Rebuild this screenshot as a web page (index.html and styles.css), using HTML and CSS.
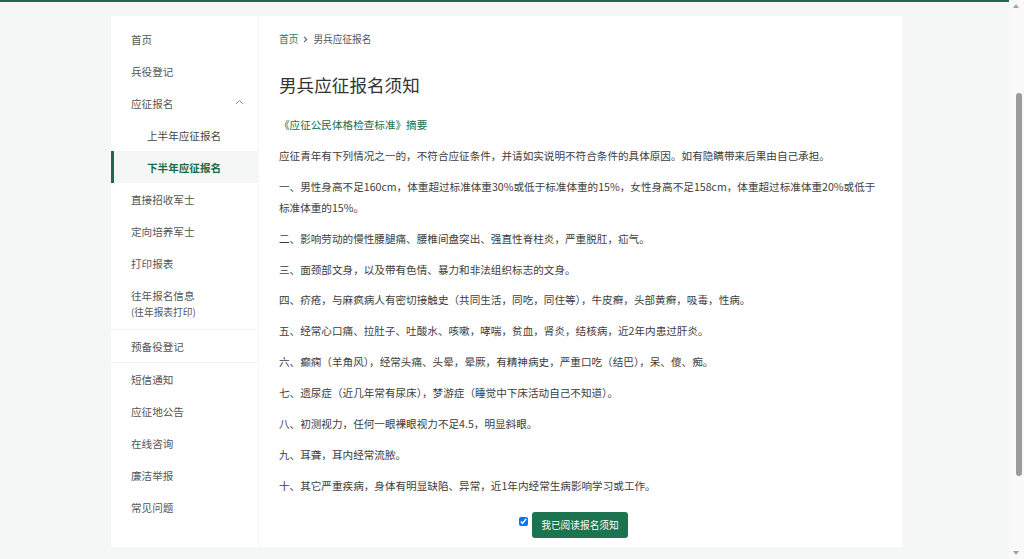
FILE: index.html
```html
<!DOCTYPE html>
<html lang="zh-CN">
<head>
  <meta charset="UTF-8">
  <meta name="viewport" content="width=device-width, initial-scale=1.0">
  <title>男兵应征报名须知</title>
  <link rel="stylesheet" href="styles.css">
</head>
<body>

  <header class="site-header"></header>

  <div class="main">
    <!-- Side menu -->
    <aside class="side-menu">
      <a class="menu-item" href="#">首页</a>
      <a class="menu-item" href="#">兵役登记</a>
      <a class="menu-item menu-group" href="#">
        <span>应征报名</span>
        <svg class="chevron" width="9" height="6" viewBox="0 0 9 6"><polyline points="1,5 4.5,1.5 8,5" fill="none" stroke="#888" stroke-width="1"/></svg>
      </a>
      <a class="menu-item sub-item" href="#">上半年应征报名</a>
      <a class="menu-item sub-item active" href="#">下半年应征报名</a>
      <a class="menu-item" href="#">直接招收军士</a>
      <a class="menu-item" href="#">定向培养军士</a>
      <a class="menu-item" href="#">打印报表</a>
      <a class="menu-item two-line" href="#">往年报名信息<small>(往年报表打印)</small></a>
      <a class="menu-item divided" href="#">预备役登记</a>
      <a class="menu-item" href="#">短信通知</a>
      <a class="menu-item" href="#">应征地公告</a>
      <a class="menu-item" href="#">在线咨询</a>
      <a class="menu-item" href="#">廉洁举报</a>
      <a class="menu-item" href="#">常见问题</a>
    </aside>

    <!-- Notice content -->
    <section class="content">
      <div class="breadcrumb">
        <a class="crumb-home" href="#">首页</a>
        <svg class="sep" width="5" height="7" viewBox="0 0 5 7"><polyline points="1,0.8 3.8,3.5 1,6.2" fill="none" stroke="#666" stroke-width="1.1"/></svg>
        <span>男兵应征报名</span>
      </div>

      <h1>男兵应征报名须知</h1>

      <p class="subtitle">《应征公民体格检查标准》摘要</p>

      <p>应征青年有下列情况之一的，不符合应征条件，并请如实说明不符合条件的具体原因。如有隐瞒带来后果由自己承担。</p>
      <p>一、男性身高不足160cm，体重超过标准体重30%或低于标准体重的15%，女性身高不足158cm，体重超过标准体重20%或低于标准体重的15%。</p>
      <p>二、影响劳动的慢性腰腿痛、腰椎间盘突出、强直性脊柱炎，严重脱肛，疝气。</p>
      <p>三、面颈部文身，以及带有色情、暴力和非法组织标志的文身。</p>
      <p>四、疥疮，与麻疯病人有密切接触史（共同生活，同吃，同住等），牛皮癣，头部黄癣，吸毒，性病。</p>
      <p>五、经常心口痛、拉肚子、吐酸水、咳嗽，哮喘，贫血，肾炎，结核病，近2年内患过肝炎。</p>
      <p>六、癫痫（羊角风），经常头痛、头晕，晕厥，有精神病史，严重口吃（结巴），呆、傻、痴。</p>
      <p>七、遗尿症（近几年常有尿床），梦游症（睡觉中下床活动自己不知道）。</p>
      <p>八、初测视力，任何一眼裸眼视力不足4.5，明显斜眼。</p>
      <p>九、耳聋，耳内经常流脓。</p>
      <p>十、其它严重疾病，身体有明显缺陷、异常，近1年内经常生病影响学习或工作。</p>

      <div class="confirm">
        <input type="checkbox" id="readNotice" checked>
        <button>我已阅读报名须知</button>
      </div>
    </section>
  </div>

  <footer class="site-footer"></footer>

  <!-- Window scrollbar, drawn since the browser hides its own -->
  <div class="scrollbar">
    <span class="arrow up"></span>
    <span class="thumb"></span>
    <span class="arrow down"></span>
  </div>

  <script src="script.js"></script>
</body>
</html>
```

FILE: styles.css
```css
/* General Styles */
body {
  margin: 0;
  padding: 0 15px 0 0;
  background-color: #f5f7f7;
  color: #3d3d3d;
  font-family: "Noto Sans CJK SC", "Noto Sans", sans-serif;
  font-size: 10.6px;
}

a {
  text-decoration: none;
  color: inherit;
}

/* Header */
.site-header {
  height: 114px;
  background-color: #fff;
  border-bottom: 2px solid #1d6a4c;
}

/* Main layout */
.main {
  display: flex;
  gap: 1px;
  width: 791px;
  margin: 14px auto 0;
  position: relative;
  left: 2px;
}

/* Side menu */
.side-menu {
  width: 147px;
  flex-shrink: 0;
  background-color: #fff;
  padding-top: 7px;
  display: flex;
  flex-direction: column;
}

.menu-item {
  display: flex;
  align-items: center;
  justify-content: space-between;
  height: 32px;
  padding: 0 14px 0 20px;
  color: #555;
}

.sub-item {
  padding-left: 36px;
  color: #444;
}

.menu-item.active {
  background-color: #f5f7f7;
  border-left: 3px solid #1d6a4c;
  padding-left: 33px;
  color: #1d6a4c;
  font-weight: bold;
}

.two-line {
  flex-direction: column;
  align-items: flex-start;
  justify-content: center;
  height: 50px;
  line-height: 16px;
}

.two-line small {
  font-size: 9.7px;
}

.divided {
  border-top: 1px solid #f0f2f2;
  border-bottom: 1px solid #f0f2f2;
}

.chevron {
  margin-top: -2px;
}

/* Content */
.content {
  flex: 1;
  background-color: #fff;
  padding: 16px 20px 9px;
}

.breadcrumb {
  display: flex;
  align-items: center;
  gap: 5px;
  font-size: 9.7px;
  line-height: 14px;
  color: #555;
}

.breadcrumb .crumb-home {
  color: #2b7a5a;
}

h1 {
  margin: 27px 0 0;
  font-size: 17.6px;
  line-height: 24px;
  font-weight: normal;
  color: #333;
}

.content p {
  margin: 10px 0 0;
  line-height: 20.9px;
}

.content p.subtitle {
  margin-top: 18px;
  color: #1d6a4c;
}

.confirm {
  display: flex;
  justify-content: center;
  align-items: center;
  gap: 4px;
  margin-top: 15px;
  padding-right: 14px;
}

.confirm input {
  width: 9px;
  height: 9px;
  margin: -6px 0 0;
}

.confirm button {
  height: 26px;
  padding: 0 9px;
  font-family: inherit;
  font-size: 9.7px;
  color: #fff;
  background-color: #1b7350;
  border: none;
  border-radius: 3px;
  cursor: pointer;
}

/* Footer */
.site-footer {
  height: 111px;
}

/* Scrollbar */
.scrollbar {
  position: fixed;
  top: 0;
  right: 0;
  width: 15px;
  height: 100%;
  background-color: #f9f9f9;
}

.scrollbar .thumb {
  position: absolute;
  top: 93px;
  left: 7px;
  width: 6px;
  height: 383px;
  border-radius: 3px;
  background-color: #9b9b9b;
}

.scrollbar .arrow {
  position: absolute;
  left: 4px;
  width: 0;
  height: 0;
  border-left: 3.5px solid transparent;
  border-right: 3.5px solid transparent;
}

.scrollbar .up {
  top: 4px;
  border-bottom: 4px solid #a3a3a3;
}

.scrollbar .down {
  bottom: 4px;
  border-top: 4px solid #a3a3a3;
}
```

FILE: script.js
```js
// Keep the page scrolled down to the notice
window.scrollTo(0, 114);
```
